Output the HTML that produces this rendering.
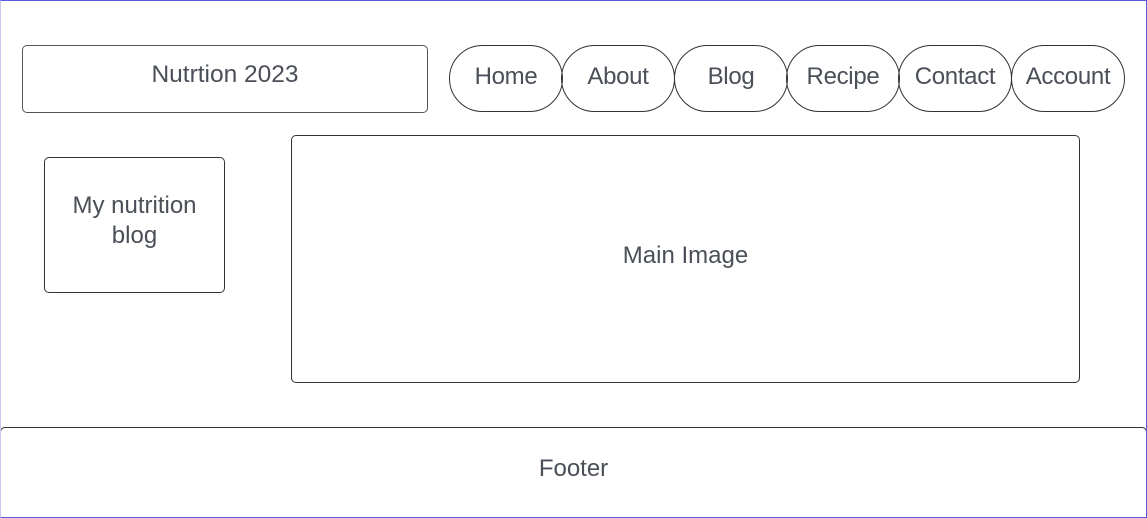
<!DOCTYPE html>
<html><head><style>
body{margin:0;width:1147px;height:518px;position:relative;background:#fff;font-family:"Liberation Sans",sans-serif;color:#4a4f58;overflow:hidden}
.f{position:absolute;box-sizing:border-box;display:flex;align-items:center;justify-content:center;text-align:center}
.frame{position:absolute;left:0;top:0;width:1147px;height:518px;box-sizing:border-box;border:1px solid #5a5ae0;border-left-color:#c8c8f0;z-index:5}
.p{border:1px solid #333;border-radius:34px;top:45px;height:67px;width:114px;font-size:24px;padding-bottom:4px;letter-spacing:-0.3px}
</style></head><body>
<div class="frame"></div>
<div class="f" style="left:22px;top:45px;width:406px;height:68px;border:1px solid #555;border-radius:5px;font-size:24.5px;padding-bottom:9px">Nutrtion 2023</div>
<div class="f p" style="left:449px">Home</div>
<div class="f p" style="left:561px">About</div>
<div class="f p" style="left:674px">Blog</div>
<div class="f p" style="left:786px">Recipe</div>
<div class="f p" style="left:898px">Contact</div>
<div class="f p" style="left:1011px">Account</div>
<div class="f" style="left:44px;top:157px;width:181px;height:136px;border:1px solid #333;border-radius:5px;font-size:24px;line-height:30px;padding-bottom:8px">My nutrition<br>blog</div>
<div class="f" style="left:291px;top:135px;width:789px;height:248px;border:1px solid #333;border-radius:5px;font-size:24px;padding-bottom:6px">Main Image</div>
<div class="f" style="left:0;top:427px;width:1147px;height:91px;border:1px solid #333;border-bottom:none;border-radius:5px 5px 0 0;font-size:24px;padding-bottom:8px">Footer</div>
</body></html>
